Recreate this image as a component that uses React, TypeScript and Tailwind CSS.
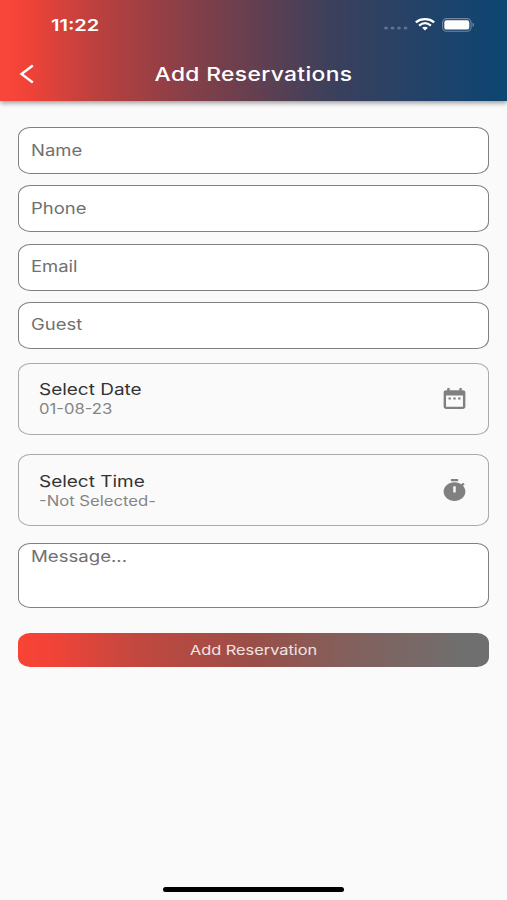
import { useState } from "react"

const fields = ["Name", "Phone", "Email", "Guest"]

const DATE_ICON =
  "M9 11H7v2h2v-2zm4 0h-2v2h2v-2zm4 0h-2v2h2v-2zm2-7h-1V2h-2v2H8V2H6v2H5c-1.11 0-1.99.9-1.99 2L3 20c0 1.1.89 2 2 2h14c1.1 0 2-.9 2-2V6c0-1.1-.9-2-2-2zm0 16H5V9h14v11z"
const TIMER_ICON =
  "M15 1H9v2h6V1zm-4 13h2V8h-2v6zm8.03-6.61l1.42-1.42c-.43-.51-.9-.99-1.41-1.41l-1.42 1.42C16.07 4.74 14.12 4 12 4c-4.97 0-9 4.03-9 9s4.02 9 9 9 9-4.03 9-9c0-2.12-.74-4.07-1.97-5.61z"

function StatusBar() {
  return (
    <div className="flex h-12 items-center justify-between pl-[51px] pr-[32px] text-white">
      <span className="origin-left scale-x-[1.25] pt-px text-[16px] font-semibold leading-6">11:22</span>
      <div className="flex items-center pt-px">
        <svg width="24" height="4" viewBox="0 0 24 4" className="mt-[7px] fill-[#66708f]">
          <ellipse cx="2" cy="2" rx="1.9" ry="1.6" />
          <ellipse cx="8.5" cy="2" rx="1.9" ry="1.6" />
          <ellipse cx="15" cy="2" rx="1.9" ry="1.6" />
          <ellipse cx="21.5" cy="2" rx="1.9" ry="1.6" />
        </svg>
        <svg width="20" height="13" viewBox="0 0 20 13" fill="none" stroke="white" strokeWidth="2.3" className="ml-[7px]">
          <path d="M.8 4.3C5.8 .1 14.2 .1 19.2 4.3" />
          <path d="M4.1 7.6C7.7 4.6 12.3 4.6 15.9 7.6" />
          <path d="M7.1 9.7C8.8 8.3 11.2 8.3 12.9 9.7L10 12.4z" fill="white" stroke="none" />
        </svg>
        <svg width="33" height="14" viewBox="0 0 33 14" className="ml-[7px]">
          <rect x=".6" y=".6" width="28.5" height="12.6" rx="4" fill="none" stroke="#7286a4" strokeWidth="1.1" />
          <rect x="2.3" y="2.2" width="25" height="9.4" rx="2.2" fill="white" />
          <path d="M30.5 4.8c2 .6 2 3.6 0 4.2z" fill="#7286a4" />
        </svg>
      </div>
    </div>
  )
}

function PickerRow({ title, value, icon }: { title: string; value: string; icon: string }) {
  return (
    <button className="flex h-[72px] w-full items-center justify-between rounded-[12px/10px] border border-[#aaaaaa] pl-5 pr-[19px] text-left">
      <span className="flex flex-col items-start pt-px">
        <span className="origin-left scale-x-[1.185] text-[16px] leading-5 text-[#333333]">{title}</span>
        <span className="origin-left scale-x-[1.19] text-[14px] leading-5 text-[#858585]">{value}</span>
      </span>
      <svg width="29" height="25" viewBox="0 0 24 24" preserveAspectRatio="none" className="fill-[#808080]">
        <path fillRule="evenodd" d={icon} />
      </svg>
    </button>
  )
}

export default function App() {
  const [form, setForm] = useState<Record<string, string>>({})

  function handleChange(e: React.ChangeEvent<HTMLInputElement | HTMLTextAreaElement>) {
    setForm({ ...form, [e.target.name]: e.target.value })
  }

  return (
    <div className="flex h-[900px] w-[507px] flex-col overflow-hidden bg-[#fafafa] font-['Inter',sans-serif]">
      <header className="h-[101px] shrink-0 bg-[linear-gradient(to_right,#f9463a_0%,#f24338_5%,#bb403e_19%,#8f3f46_34%,#653f50_50%,#3c405b_65%,#274266_80%,#0e4571_98%)] shadow-[0_2px_5px_rgba(0,0,0,0.4)]">
        <StatusBar />
        <div className="grid h-[52px] grid-cols-[60px_1fr_60px] items-center">
          <svg width="16" height="20" viewBox="0 0 16 20" fill="none" stroke="white" strokeWidth="2.4" className="ml-[19px]">
            <path d="M13.8 1.5L2.5 10l11.3 8.5" />
          </svg>
          <h1 className="scale-x-[1.2] whitespace-nowrap pt-0.5 text-center text-[19px] font-medium tracking-[0.3px] text-white">
            Add Reservations
          </h1>
        </div>
      </header>

      <form className="flex flex-col px-[18px] pt-[26px]">
        <div className="flex flex-col gap-[11.3px]">
          {fields.map((name) => (
            <label key={name} className="flex h-[47px] items-center rounded-[12px/10px] border border-[#808080] bg-white pl-3">
              <input
                name={name}
                placeholder={name}
                value={form[name] ?? ""}
                onChange={handleChange}
                className="w-[360px] origin-left scale-x-[1.19] text-[15.5px] leading-5 outline-none placeholder:text-[#707070]"
              />
            </label>
          ))}
        </div>

        <div className="mt-[14px] flex flex-col gap-[19.5px]">
          <PickerRow title="Select Date" value="01-08-23" icon={DATE_ICON} />
          <PickerRow title="Select Time" value="-Not Selected-" icon={TIMER_ICON} />
        </div>

        <label className="mt-[16.5px] flex h-[65.5px] rounded-[12px/10px] border border-[#808080] bg-white pl-3 pt-[3px]">
          <textarea
            name="message"
            placeholder="Message..."
            value={form.message ?? ""}
            onChange={handleChange}
            className="h-[56px] w-[360px] origin-left scale-x-[1.2] resize-none text-[15.5px] leading-5 outline-none placeholder:text-[#707070]"
          />
        </label>

        <button
          type="button"
          className="mt-[25px] flex h-[34px] items-center justify-center rounded-[12px/10px] bg-[linear-gradient(to_right,#f94335_0%,#f04337_8%,#c2483f_25%,#9a4e48_50%,#83605c_70%,#6f6f6f_95%)] text-[13.5px] text-white/85"
        >
          <span className="scale-x-[1.21]">Add Reservation</span>
        </button>
      </form>

      <div className="mx-auto mb-2 mt-auto h-[5px] w-[181px] shrink-0 rounded-full bg-black" />
    </div>
  )
}
